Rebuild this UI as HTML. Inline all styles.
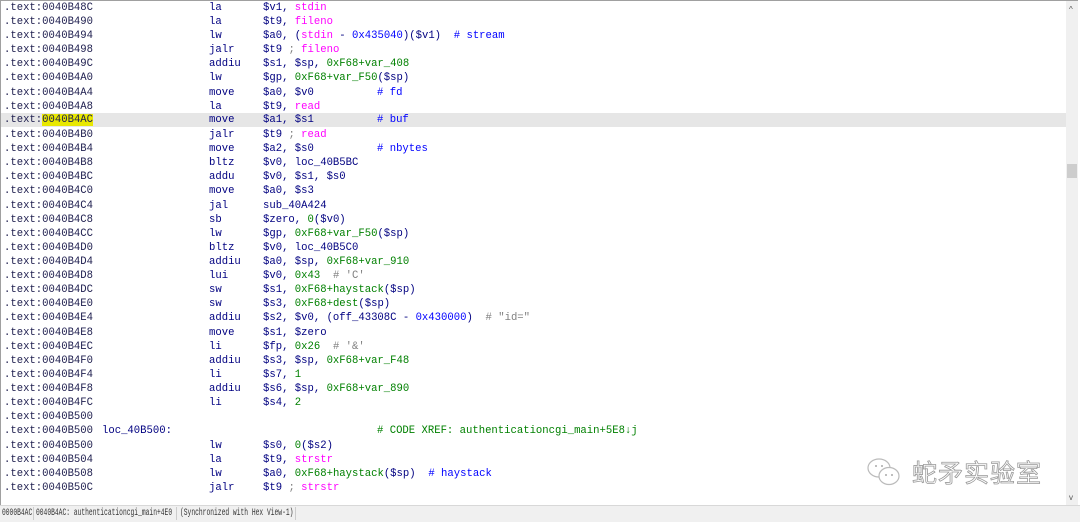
<!DOCTYPE html>
<html><head><meta charset="utf-8"><style>
body{margin:0;width:1080px;height:521px;overflow:hidden;background:#fff;position:relative;font-family:"Liberation Mono",monospace;font-size:10.6px;}
.fr{position:absolute;left:0;top:0;width:1078px;height:505px;border-top:1px solid #a0a0a0;border-left:1px solid #a0a0a0;border-right:2px solid #a0a0a0;box-sizing:border-box;}
.r{position:absolute;left:1px;width:1066px;height:14px;line-height:14px;white-space:pre;color:#000080;}
.a{position:absolute;left:3px;color:#202050;}
.m{position:absolute;left:208px;}
.o{position:absolute;left:262px;}
.c{position:absolute;left:376px;color:#0000ff;}
.p{color:#ff00ff}.g{color:#008000}.b{color:#0000ff}.gr{color:#808080}
.sb{position:absolute;left:1066px;top:1px;width:12px;height:504px;background:#f0f0f0;}
.st{position:absolute;left:0;top:505px;width:1080px;height:16px;background:#f0f0f0;border-top:1px solid #d8d8d8;font-size:10px;line-height:15px;color:#333;white-space:pre;}
.st span.t{position:absolute;top:0;transform-origin:0 50%;transform:scaleX(0.63)}
</style></head><body>
<div class="fr"></div>
<div class="r" style="top:1px"><span class="a">.text:0040B48C</span><span class="m">la</span><span class="o">$v1, <span class="p">stdin</span></span></div>
<div class="r" style="top:15px"><span class="a">.text:0040B490</span><span class="m">la</span><span class="o">$t9, <span class="p">fileno</span></span></div>
<div class="r" style="top:29px"><span class="a">.text:0040B494</span><span class="m">lw</span><span class="o">$a0, (<span class="p">stdin</span> - <span class="b">0x435040</span>)($v1)  <span class="b"># stream</span></span></div>
<div class="r" style="top:43px"><span class="a">.text:0040B498</span><span class="m">jalr</span><span class="o">$t9 <span class="gr">;</span> <span class="p">fileno</span></span></div>
<div class="r" style="top:57px"><span class="a">.text:0040B49C</span><span class="m">addiu</span><span class="o">$s1, $sp, <span class="g">0xF68+var_408</span></span></div>
<div class="r" style="top:71px"><span class="a">.text:0040B4A0</span><span class="m">lw</span><span class="o">$gp, <span class="g">0xF68+var_F50</span>($sp)</span></div>
<div class="r" style="top:86px"><span class="a">.text:0040B4A4</span><span class="m">move</span><span class="o">$a0, $v0</span><span class="c"># fd</span></div>
<div class="r" style="top:100px"><span class="a">.text:0040B4A8</span><span class="m">la</span><span class="o">$t9, <span class="p">read</span></span></div>
<div class="r" style="top:113px;background:#e6e6e6"><span class="a">.text:<span style="background:#e8e800">0040B4AC</span></span><span class="m">move</span><span class="o">$a1, $s1</span><span class="c"># buf</span></div>
<div class="r" style="top:128px"><span class="a">.text:0040B4B0</span><span class="m">jalr</span><span class="o">$t9 <span class="gr">;</span> <span class="p">read</span></span></div>
<div class="r" style="top:142px"><span class="a">.text:0040B4B4</span><span class="m">move</span><span class="o">$a2, $s0</span><span class="c"># nbytes</span></div>
<div class="r" style="top:156px"><span class="a">.text:0040B4B8</span><span class="m">bltz</span><span class="o">$v0, loc_40B5BC</span></div>
<div class="r" style="top:170px"><span class="a">.text:0040B4BC</span><span class="m">addu</span><span class="o">$v0, $s1, $s0</span></div>
<div class="r" style="top:184px"><span class="a">.text:0040B4C0</span><span class="m">move</span><span class="o">$a0, $s3</span></div>
<div class="r" style="top:199px"><span class="a">.text:0040B4C4</span><span class="m">jal</span><span class="o">sub_40A424</span></div>
<div class="r" style="top:213px"><span class="a">.text:0040B4C8</span><span class="m">sb</span><span class="o">$zero, <span class="g">0</span>($v0)</span></div>
<div class="r" style="top:227px"><span class="a">.text:0040B4CC</span><span class="m">lw</span><span class="o">$gp, <span class="g">0xF68+var_F50</span>($sp)</span></div>
<div class="r" style="top:241px"><span class="a">.text:0040B4D0</span><span class="m">bltz</span><span class="o">$v0, loc_40B5C0</span></div>
<div class="r" style="top:255px"><span class="a">.text:0040B4D4</span><span class="m">addiu</span><span class="o">$a0, $sp, <span class="g">0xF68+var_910</span></span></div>
<div class="r" style="top:269px"><span class="a">.text:0040B4D8</span><span class="m">lui</span><span class="o">$v0, <span class="g">0x43</span>  <span class="gr"># 'C'</span></span></div>
<div class="r" style="top:283px"><span class="a">.text:0040B4DC</span><span class="m">sw</span><span class="o">$s1, <span class="g">0xF68+haystack</span>($sp)</span></div>
<div class="r" style="top:297px"><span class="a">.text:0040B4E0</span><span class="m">sw</span><span class="o">$s3, <span class="g">0xF68+dest</span>($sp)</span></div>
<div class="r" style="top:311px"><span class="a">.text:0040B4E4</span><span class="m">addiu</span><span class="o">$s2, $v0, (off_43308C - <span class="b">0x430000</span>)  <span class="gr"># "id="</span></span></div>
<div class="r" style="top:326px"><span class="a">.text:0040B4E8</span><span class="m">move</span><span class="o">$s1, $zero</span></div>
<div class="r" style="top:340px"><span class="a">.text:0040B4EC</span><span class="m">li</span><span class="o">$fp, <span class="g">0x26</span>  <span class="gr"># '&amp;'</span></span></div>
<div class="r" style="top:354px"><span class="a">.text:0040B4F0</span><span class="m">addiu</span><span class="o">$s3, $sp, <span class="g">0xF68+var_F48</span></span></div>
<div class="r" style="top:368px"><span class="a">.text:0040B4F4</span><span class="m">li</span><span class="o">$s7, <span class="g">1</span></span></div>
<div class="r" style="top:382px"><span class="a">.text:0040B4F8</span><span class="m">addiu</span><span class="o">$s6, $sp, <span class="g">0xF68+var_890</span></span></div>
<div class="r" style="top:396px"><span class="a">.text:0040B4FC</span><span class="m">li</span><span class="o">$s4, <span class="g">2</span></span></div>
<div class="r" style="top:410px"><span class="a">.text:0040B500</span></div>
<div class="r" style="top:424px"><span class="a">.text:0040B500</span><span style="position:absolute;left:101px">loc_40B500:</span><span class="c" style="color:#008000"># CODE XREF: authenticationcgi_main+5E8↓j</span></div>
<div class="r" style="top:439px"><span class="a">.text:0040B500</span><span class="m">lw</span><span class="o">$s0, <span class="g">0</span>($s2)</span></div>
<div class="r" style="top:453px"><span class="a">.text:0040B504</span><span class="m">la</span><span class="o">$t9, <span class="p">strstr</span></span></div>
<div class="r" style="top:467px"><span class="a">.text:0040B508</span><span class="m">lw</span><span class="o">$a0, <span class="g">0xF68+haystack</span>($sp)  <span class="b"># haystack</span></span></div>
<div class="r" style="top:481px"><span class="a">.text:0040B50C</span><span class="m">jalr</span><span class="o">$t9 <span class="gr">;</span> <span class="p">strstr</span></span></div>
<div class="sb"><div style="position:absolute;top:4px;left:3px;font-size:8px;color:#555;font-family:'Liberation Sans',sans-serif">^</div><div style="position:absolute;top:163px;left:1px;width:10px;height:14px;background:#cdcdcd"></div><div style="position:absolute;top:492px;left:3px;font-size:8px;color:#555;font-family:'Liberation Sans',sans-serif">v</div></div>
<div style="position:absolute;left:865px;top:456px;width:40px;height:34px">
<svg width="40" height="34" viewBox="0 0 40 34"><ellipse cx="14" cy="12" rx="11" ry="9" fill="#fff" stroke="#bbb" stroke-width="1.2"/><ellipse cx="24" cy="20" rx="10" ry="8.5" fill="#fff" stroke="#bbb" stroke-width="1.2"/><circle cx="11" cy="10" r="1" fill="#aaa"/><circle cx="17" cy="10" r="1" fill="#aaa"/><circle cx="21" cy="19" r="1" fill="#aaa"/><circle cx="27" cy="19" r="1" fill="#aaa"/></svg></div>
<div style="position:absolute;left:912px;top:455px;font-family:'Noto Sans CJK SC',sans-serif;font-size:25px;color:#fff;-webkit-text-stroke:0.8px #999;letter-spacing:1px;line-height:34px">蛇矛实验室</div>
<div class="st"><span class="t" style="left:2px">0000B4AC</span><span class="t" style="left:36px">0040B4AC: authenticationcgi_main+4E0</span><span class="t" style="left:180px">(Synchronized with Hex View-1)</span><span style="position:absolute;left:33px;top:1px;width:1px;height:13px;background:#ccc"></span><span style="position:absolute;left:176px;top:1px;width:1px;height:13px;background:#ccc"></span><span style="position:absolute;left:295px;top:1px;width:1px;height:13px;background:#ccc"></span></div>
</body></html>
